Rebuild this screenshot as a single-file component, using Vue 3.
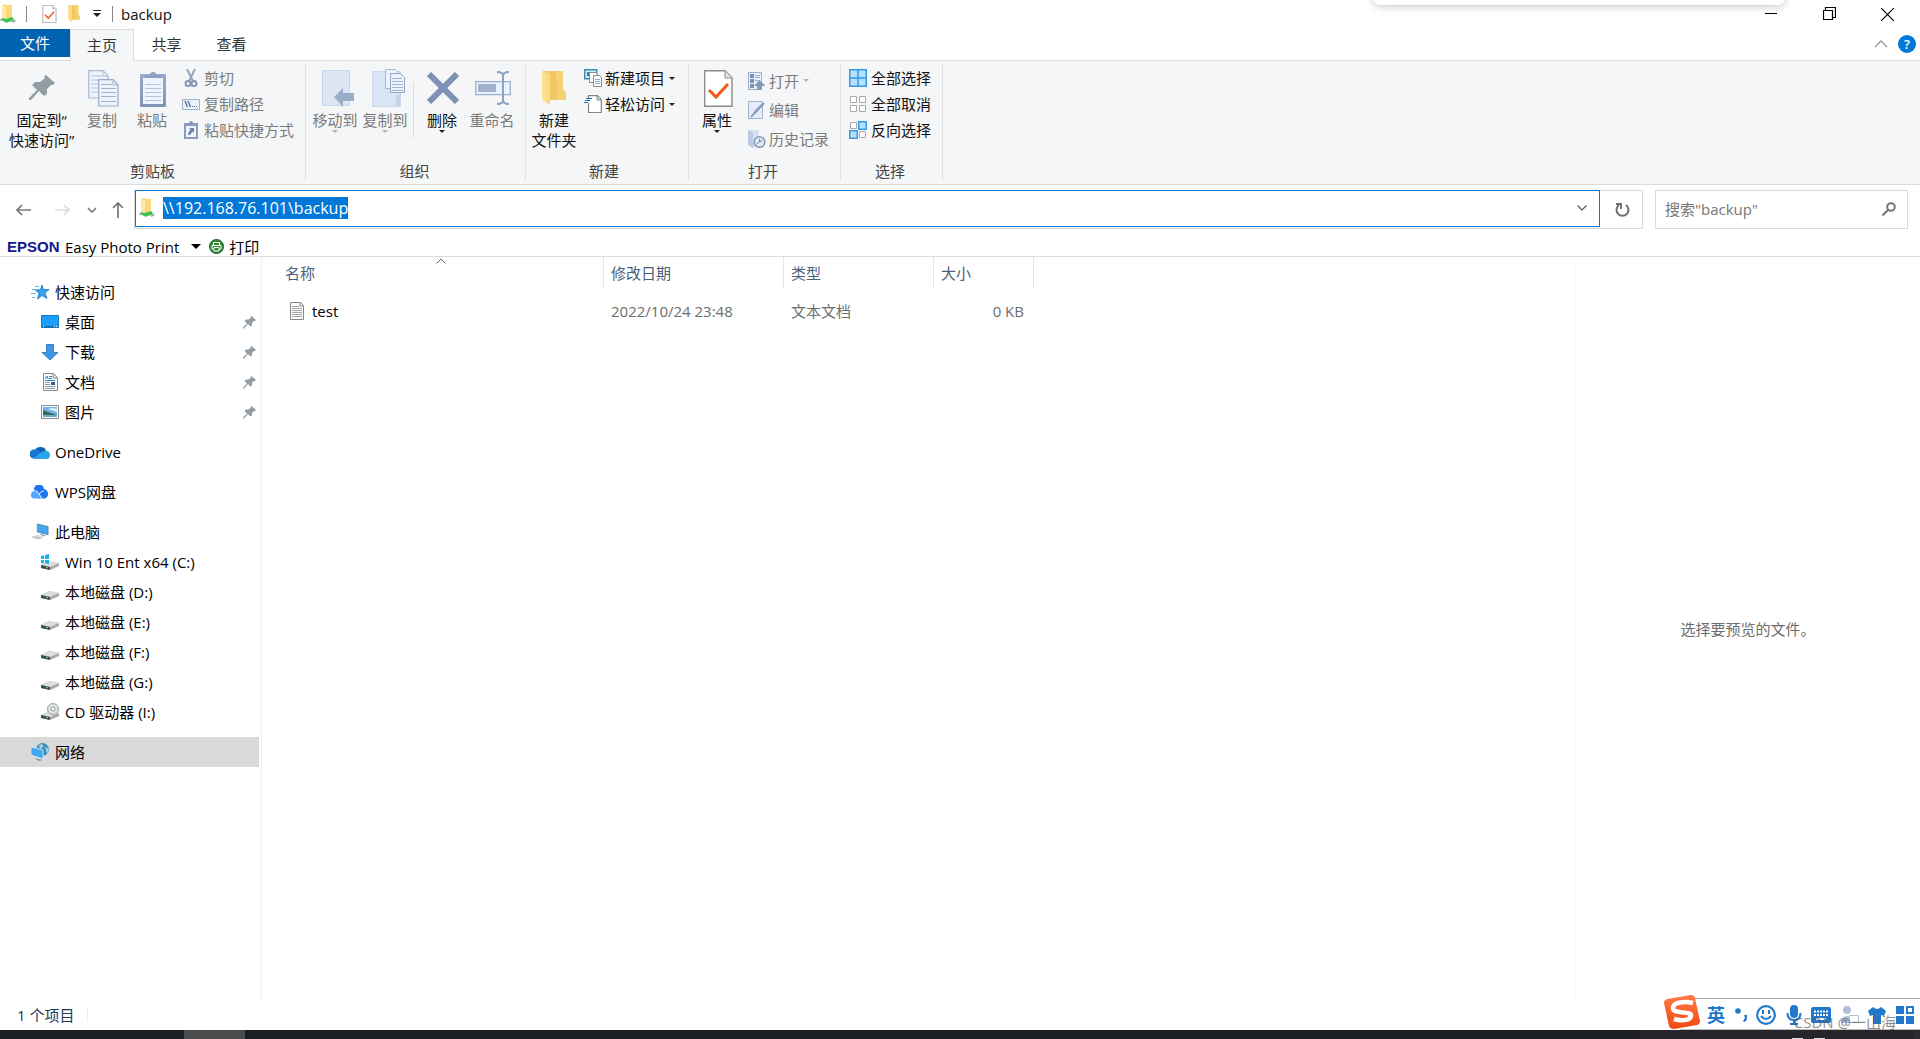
<script setup>
import { onMounted, ref } from 'vue'

const path = ref('\\\\192.168.76.101\\backup')
const query = ref('')
const pathBox = ref(null)

const quick = [
  { icon: 'desktop', name: '桌面' },
  { icon: 'download', name: '下载' },
  { icon: 'document', name: '文档' },
  { icon: 'picture', name: '图片' },
]
const drives = [
  { icon: 'windrive', name: 'Win 10 Ent x64 (C:)' },
  { icon: 'drive', name: '本地磁盘 (D:)' },
  { icon: 'drive', name: '本地磁盘 (E:)' },
  { icon: 'drive', name: '本地磁盘 (F:)' },
  { icon: 'drive', name: '本地磁盘 (G:)' },
  { icon: 'cddrive', name: 'CD 驱动器 (I:)' },
]

onMounted(() => {
  pathBox.value.focus()
  pathBox.value.select()
})
</script>

<template>
  <div class="window">
    <svg class="defs" aria-hidden="true">
      <defs>
        <linearGradient id="gold" x1="0" x2="1" y1="0" y2="0">
          <stop offset="0" stop-color="#ffe596" /><stop offset="1" stop-color="#f8d67c" />
        </linearGradient>
        <linearGradient id="clip" x1="0" x2="0" y1="0" y2="1">
          <stop offset="0" stop-color="#9babc9" /><stop offset="1" stop-color="#8092b5" />
        </linearGradient>
        <linearGradient id="sogou" x1="0" x2="0" y1="0" y2="1">
          <stop offset="0" stop-color="#ff7a45" /><stop offset="1" stop-color="#ee4a10" />
        </linearGradient>
      </defs>
      <symbol id="netfolder" viewBox="0 0 16 20">
        <path d="M2 1l3-1 2 1h5v12l-5 2-5-1z" fill="#fbd978" />
        <path d="M2 1l4 1v13l-4-1z" fill="#ffe9a6" />
        <path d="M0 15l3-1v3H0z" fill="#b7c1c6" />
        <path d="M12 15l4 1-1 2-3 1z" fill="#a9b3b8" />
        <path d="M2 14l4 1 6-2 2 2-2 1 1 1-5 1-1 1-4-2-1-1z" fill="#3cc04f" />
      </symbol>
      <symbol id="folder" viewBox="0 0 26 35">
        <path d="M8 0h13v19l3 2v8H8z" fill="#efc861" />
        <path d="M14 0h7v19l3 2v8h-8z" fill="#fbdc82" opacity=".55" />
        <path d="M0 0l8 5v29L0 29z" fill="url(#gold)" />
        <path d="M0 0h8v5z" fill="#f4d278" />
      </symbol>
      <symbol id="pin" viewBox="0 0 26 26">
        <path d="M17 0l9 8-2 2-2 0-4 4 0 5-3 2-5-5-8 9-2 0 0-2 8-8-5-5 3-3h5l5-4-1-2z" fill="#929da4" />
      </symbol>
      <symbol id="checkdoc" viewBox="0 0 29 37">
        <path d="M.7.7H21l7 7v28.600H.7z" fill="#fff" stroke="#8c8c8c" stroke-width="1.400" />
        <path d="M21 1v7h7" fill="#e4e4e4" stroke="#8c8c8c" />
        <path d="M5 20l7 7 12-13" fill="none" stroke="#f15a16" stroke-width="3" />
      </symbol>
      <symbol id="sheets" viewBox="0 0 31 37">
        <path d="M.7.7H15l5 5V28H.7z" fill="#edf3fb" stroke="#a9b8d3" stroke-width="1.200" />
        <path d="M3 6h11M3 10h14M3 14h7M3 18h7M3 22h7M15 1v5h5" fill="none" stroke="#b3c1dc" />
        <path d="M10.700 9.700H25l5 5V36H10.700z" fill="#edf3fb" stroke="#98a9c9" stroke-width="1.200" />
        <path d="M13 14.500h11M13 18.500h15M13 22.500h15M13 26.500h15M13 31.500h15M25 10v5h5" fill="none" stroke="#a1b1d2" />
      </symbol>
      <symbol id="paste" viewBox="0 0 26 37">
        <rect y="4" width="26" height="33" rx="1" fill="url(#clip)" />
        <path d="M3 8h20v26H3z" fill="#edf4fd" />
        <path d="M5 14.500h16M5 18.500h16M5 22.500h16M5 26.500h16M5 30.500h16" stroke="#b5c4df" />
        <path d="M5 8V5h5a3 3 0 1 1 6 0h5v3z" fill="#8f9fbd" />
      </symbol>
      <symbol id="cut" viewBox="0 0 18 18">
        <path d="M5 0l6 12M13 0L7 12" stroke="#93a3bf" stroke-width="2" />
        <circle cx="6" cy="14.500" r="2.500" fill="none" stroke="#8797b6" stroke-width="2" />
        <circle cx="12" cy="14.500" r="2.500" fill="none" stroke="#8797b6" stroke-width="2" />
      </symbol>
      <symbol id="copypath" viewBox="0 0 18 18">
        <path d="M.5 4.500h17v10H.5z" fill="#e8f0fb" stroke="#9fb0cb" />
        <path d="M3 6l2.500 6M6 6l2.500 6" stroke="#5b6d92" stroke-width="1.300" />
        <path d="M10 11.500h1M12 11.500h1M14 11.500h1" stroke="#5b6d92" />
      </symbol>
      <symbol id="shortcut" viewBox="0 0 18 18">
        <path d="M2 2h5a2 2 0 0 1 4 0h5v16H2z" fill="#8a9bbc" />
        <path d="M4 5h10v11H4z" fill="#edf4fd" />
        <path d="M7 7h5v5l-1.500-1.500L8 14H6q0-3 2.500-5.500z" fill="#6f84ac" />
      </symbol>
      <symbol id="moveto" viewBox="0 0 33 37">
        <path d="M.5.500h27v35H.5z" fill="#dbe5f4" stroke="#c9d7ec" />
        <path d="M12 27l9-9v5h11v8H21v6z" fill="#9bacc9" />
      </symbol>
      <symbol id="copyto" viewBox="0 0 33 38">
        <path d="M.5 2.500h28v35H.5z" fill="#d9e4f4" stroke="#c9d7ec" />
        <path d="M24 26h4v11h-4z" fill="#c4d2e8" />
        <path d="M13.500.500h10l3 3v16h-13z" fill="#edf3fb" stroke="#a6b6d2" />
        <path d="M18.500 4.500h10l4 4v15h-14z" fill="#edf3fb" stroke="#93a5c6" />
        <path d="M20 9.500h10M20 12.500h11M20 15.500h11M20 18.500h11M20 21.500h11" stroke="#a1b1d2" />
      </symbol>
      <symbol id="delete" viewBox="0 0 32 32">
        <path d="M2 2l28 28M30 2L2 30" stroke="#7f92b5" stroke-width="6" />
      </symbol>
      <symbol id="rename" viewBox="0 0 36 34">
        <path d="M.7 10.700h34.600v13H.7z" fill="#e9f2fd" stroke="#9dafcf" stroke-width="1.300" />
        <path d="M3 13h18v8H3z" fill="#a1b1cf" />
        <path d="M22 1c3 0 6 1 6 4v24c0 3-3 4-6 4M34 1c-3 0-6 1-6 4v24c0 3 3 4 6 4" fill="none" stroke="#8da0c1" stroke-width="2" />
      </symbol>
      <symbol id="newitem" viewBox="0 0 18 18">
        <path d="M.7.700h12v9H.7z" fill="#cdebf8" stroke="#3f8bad" stroke-width="1.400" />
        <path d="M3 3h5v4H3z" fill="#377b9a" />
        <path d="M5.500 3.500h6l2 2v8h-8z" fill="#fff" stroke="#8a8a8a" />
        <path d="M9.500 6.500h6l2 2v9h-8z" fill="#fff" stroke="#8a8a8a" />
        <path d="M11 10.500h5M11 12.500h5M11 14.500h5" stroke="#87aeda" />
      </symbol>
      <symbol id="easy" viewBox="0 0 18 18">
        <path d="M4.500.700h9l3.800 3.800v13H4.500z" fill="#fff" stroke="#858585" stroke-width="1.200" />
        <path d="M13 1v4h4" fill="#ddd" stroke="#858585" />
        <path d="M3 3h4v5H3z" fill="#f5f6f7" />
        <path d="M2 3.500h6M1 5.500h5M0 7.500h4" stroke="#1c6fb7" />
      </symbol>
      <symbol id="open" viewBox="0 0 18 18">
        <path d="M.5.500h13v17H.5z" fill="#e8f0fb" stroke="#9fb0cb" />
        <path d="M2 2h4v4H2zM2 7h4v4H2zM2 12h4v4H2z" fill="#7f91b3" />
        <path d="M7 3.500h5M7 5.500h5M7 8.500h4" stroke="#9fb0cb" />
        <path d="M11.500 8l6 6H14v4H9v-4H6z" fill="#8698b9" />
      </symbol>
      <symbol id="edit" viewBox="0 0 18 18">
        <path d="M.5.500h14v17H.5z" fill="#e4edf9" stroke="#9fb0cb" />
        <path d="M4 15l2-5 8-8 2 2-9 9z" fill="#a4b4d1" />
        <path d="M3 16L16 2" stroke="#7e91b5" stroke-width="1.500" />
      </symbol>
      <symbol id="history" viewBox="0 0 18 18">
        <path d="M0 0h11v15l-6 3-5-3z" fill="#d4e0f1" />
        <path d="M0 0l5 3v15l-5-3z" fill="#bccbe3" />
        <circle cx="11.500" cy="12" r="5.300" fill="#e2e9f4" stroke="#8496b7" stroke-width="1.500" />
        <path d="M11.500 9v3l-3 2M12 12l2-2" fill="none" stroke="#7082a5" />
      </symbol>
      <symbol id="selall" viewBox="0 0 18 18">
        <path d="M.7.700h16.600v16.600H.7zM9 1v16M1 9h16" fill="#b5e1fb" stroke="#3499e5" stroke-width="1.500" />
      </symbol>
      <symbol id="selnone" viewBox="0 0 18 18">
        <path d="M1.500 1.500h6v6h-6zM10.500 1.500h6v6h-6zM1.500 10.500h6v6h-6zM10.500 10.500h6v6h-6z" fill="#fff" stroke="#aaa" />
      </symbol>
      <symbol id="selinv" viewBox="0 0 18 18">
        <path d="M1.500 1.500h6v6h-6zM10.500 10.500h6v6h-6z" fill="#fff" stroke="#aaa" />
        <path d="M9.700.700h7.600v7.600H9.700zM.7 9.700h7.600v7.600H.7z" fill="#b5e1fb" stroke="#3499e5" stroke-width="1.500" />
      </symbol>
      <symbol id="star" viewBox="0 0 18 18">
        <path d="M11 2l1.500 4.500H18L14 10l2 5.500-5-3-4.500 3.500L8 10.500 4.500 7l5-.5z" fill="#35a3ec" stroke="#1673bf" stroke-width=".8" />
        <path d="M4 3.500h4M1 6.500h4M0 10.500h5M1 14.500h3" stroke="#64b9ee" />
      </symbol>
      <symbol id="desktop" viewBox="0 0 18 18">
        <path d="M.5 2.500h17v12H.5z" fill="#1a9dfb" stroke="#1479c4" />
        <path d="M1 13.500h16" stroke="#0f66a8" /><path d="M2 13.500h1M13 13.500h1M15 13.500h1" stroke="#fff" />
      </symbol>
      <symbol id="download" viewBox="0 0 18 18">
        <path d="M5.500 1.500h7v8h4.500l-8 7.500-8-7.500h4.500z" fill="#3c97ea" stroke="#1f6fb8" stroke-width=".8" />
      </symbol>
      <symbol id="document" viewBox="0 0 18 18">
        <path d="M2.500.500h10l4 4v13h-14z" fill="#fff" stroke="#8a8a8a" />
        <path d="M12 1v4h4" fill="#ddd" stroke="#8a8a8a" />
        <path d="M4 6l2-3 1 3M8 3.500h3M8 5.500h3M4 7.500h10" stroke="#2383c9" fill="none" />
        <path d="M4 9.500h5M4 11.500h5M4 13.500h10M4 15.500h10" stroke="#8d9ba7" /><path d="M10 9h4v3h-4z" fill="#315f92" />
      </symbol>
      <symbol id="picture" viewBox="0 0 18 18">
        <path d="M.5 2.500h17v13H.5z" fill="#fff" stroke="#8a8a8a" />
        <path d="M2 4h14v10H2z" fill="#71b3e8" /><path d="M2 7l5 2 9 3v1H2z" fill="#396a58" /><path d="M7 6q5-2 9 0v3z" fill="#d8edfa" /><path d="M2 12h14v2H2z" fill="#6aa8cf" />
      </symbol>
      <symbol id="onedrive" viewBox="0 0 20 14">
        <path d="M5 5a6 5 0 0 1 11 0l-4 6z" fill="#0c63b5" />
        <path d="M4 4.500c3-1 5 1 7 3l-5 6H4a4.500 4.500 0 0 1 0-9z" fill="#1479d2" />
        <path d="M4 13l8-6c5-3 8 0 8 3 0 2-1 4-3 4H5z" fill="#2ba5ea" />
      </symbol>
      <symbol id="wps" viewBox="0 0 20 14">
        <path d="M4 5a5 5 0 0 1 10-1 5 5 0 0 1 1 9.500H9z" fill="#1f74f0" />
        <path d="M1 10a4.500 4.500 0 0 1 7-4l5 7.500H4a3 3 0 0 1-3-3.500z" fill="#57a6fc" />
        <path d="M3 6c4-1 6 3 9 8M9 9q2-3 5-3" fill="none" stroke="#fff" stroke-width=".8" />
      </symbol>
      <symbol id="pc" viewBox="0 0 20 18">
        <path d="M7 0l12 3v9L7 9z" fill="#42a8f4" stroke="#59788f" stroke-width=".8" />
        <path d="M11 11l6 2-3 1-4-2z" fill="#9baab5" /><path d="M0 14l8-2 6 3-7 3z" fill="#d5dadd" /><path d="M2 15l9 1" stroke="#b3b9bd" />
      </symbol>
      <symbol id="drive" viewBox="0 0 18 18">
        <path d="M0 12l8-4 10 2v3l-9 4-9-2z" fill="#a8a8a8" /><path d="M0 12l8-4 10 2-9 4z" fill="#dedede" /><path d="M0 12l9 2v3l-9-2z" fill="#494949" /><path d="M5 14.500h2" stroke="#48ce52" stroke-width="1.500" />
      </symbol>
      <symbol id="windrive" viewBox="0 0 18 18">
        <use href="#drive" />
        <path d="M0 3l3-.5V6H0zM4 2l4-1v5H4zM0 7h3v3.500L0 10zM4 7h4v4l-4-.5z" fill="#15b4ee" />
      </symbol>
      <symbol id="cddrive" viewBox="0 0 18 18">
        <use href="#drive" />
        <circle cx="12" cy="6" r="5.500" fill="#dce1e1" stroke="#9da4a4" /><circle cx="12" cy="6" r="2" fill="#fff" stroke="#999" />
      </symbol>
      <symbol id="network" viewBox="0 0 18 18">
        <circle cx="11.500" cy="6.500" r="6.500" fill="#3f8fb9" /><path d="M8 2c3-2 5 0 4 2L9 6zM14 4l4 2-2 5z" fill="#a0d4e8" />
        <path d="M0 4l12 3v9L0 12z" fill="#3da9f5" stroke="#dcecf5" stroke-width=".8" /><path d="M3 15l5 1 4 1-4 1z" fill="#8497a4" />
      </symbol>
      <symbol id="textfile" viewBox="0 0 18 18">
        <path d="M2.500.500h10l3 3v14h-13z" fill="#fcfcfc" stroke="#858585" />
        <path d="M4 4.500h7M4 6.500h10M4 8.500h10M4 10.500h10M4 12.500h10M4 14.500h10" stroke="#a5a5a5" /><path d="M12 1v3h3" fill="none" stroke="#858585" />
      </symbol>
    </svg>

    <header class="titlebar">
      <svg class="t-net"><use href="#netfolder" /></svg>
      <i class="t-sep"></i>
      <button class="bare" aria-label="属性"><svg class="t-check"><use href="#checkdoc" /></svg></button>
      <button class="bare" aria-label="新建文件夹"><svg class="t-folder"><use href="#folder" /></svg></button>
      <button class="bare t-more" aria-label="自定义快速访问工具栏"><svg width="8" height="8"><path d="M0 .5h8" stroke="#222" /><path d="M0 3h8L4 7z" fill="#222" /></svg></button>
      <i class="t-sep"></i>
      <h1>backup</h1>
      <div class="controls">
        <button class="bare" aria-label="最小化"><svg width="12" height="12"><path d="M0 5.500h12" stroke="#000" /></svg></button>
        <button class="bare" aria-label="还原"><svg width="13" height="14"><path d="M.5 3.500h9v9h-9zM2.500 3V.5h10v10H10" fill="none" stroke="#000" stroke-width="1.200" /></svg></button>
        <button class="bare" aria-label="关闭"><svg width="13" height="13"><path d="M0 0l13 13M13 0L0 13" stroke="#000" stroke-width="1.200" /></svg></button>
      </div>
      <div class="flyout"></div>
    </header>

    <nav class="tabs">
      <button class="tab file">文件</button>
      <button class="tab active">主页</button>
      <button class="tab">共享</button>
      <button class="tab">查看</button>
      <div class="tab-end">
        <button class="bare" aria-label="折叠功能区"><svg width="14" height="8"><path d="M1 7l6-6 6 6" fill="none" stroke="#999" stroke-width="1.400" /></svg></button>
        <button class="help" aria-label="帮助">?</button>
      </div>
    </nav>

    <section class="ribbon">
      <div class="group g-clip">
        <div class="tools">
          <button class="big w70"><span class="pic"><svg width="26" height="26"><use href="#pin" /></svg></span>固定到“<br />快速访问”</button>
          <button class="big off"><span class="pic near"><svg width="31" height="37"><use href="#sheets" /></svg></span>复制</button>
          <button class="big off"><span class="pic near"><svg width="26" height="37"><use href="#paste" /></svg></span>粘贴</button>
          <div class="stack">
            <button class="small off"><svg><use href="#cut" /></svg>剪切</button>
            <button class="small off"><svg><use href="#copypath" /></svg>复制路径</button>
            <button class="small off"><svg><use href="#shortcut" /></svg>粘贴快捷方式</button>
          </div>
        </div>
        <p>剪贴板</p>
      </div>
      <div class="group g-org">
        <div class="tools">
          <button class="big off"><span class="pic far"><svg width="33" height="37"><use href="#moveto" /></svg></span>移动到<i class="caret"></i></button>
          <button class="big off"><span class="pic far"><svg width="33" height="38"><use href="#copyto" /></svg></span>复制到<i class="caret"></i></button>
          <i class="bar"></i>
          <button class="big"><span class="pic near"><svg width="32" height="32"><use href="#delete" /></svg></span>删除<i class="caret"></i></button>
          <button class="big off"><span class="pic near"><svg width="36" height="34"><use href="#rename" /></svg></span>重命名</button>
        </div>
        <p>组织</p>
      </div>
      <div class="group g-new">
        <div class="tools">
          <button class="big w56"><span class="pic near"><svg width="26" height="35"><use href="#folder" /></svg></span>新建<br />文件夹</button>
          <div class="stack">
            <button class="small"><svg><use href="#newitem" /></svg>新建项目<i class="caret"></i></button>
            <button class="small"><svg><use href="#easy" /></svg>轻松访问<i class="caret"></i></button>
          </div>
        </div>
        <p>新建</p>
      </div>
      <div class="group g-open">
        <div class="tools">
          <button class="big"><span class="pic near"><svg width="29" height="37"><use href="#checkdoc" /></svg></span>属性<i class="caret"></i></button>
          <div class="stack loose">
            <button class="small off"><svg><use href="#open" /></svg>打开<i class="caret"></i></button>
            <button class="small off"><svg><use href="#edit" /></svg>编辑</button>
            <button class="small off"><svg><use href="#history" /></svg>历史记录</button>
          </div>
        </div>
        <p>打开</p>
      </div>
      <div class="group g-sel">
        <div class="tools">
          <div class="stack">
            <button class="small"><svg><use href="#selall" /></svg>全部选择</button>
            <button class="small"><svg><use href="#selnone" /></svg>全部取消</button>
            <button class="small"><svg><use href="#selinv" /></svg>反向选择</button>
          </div>
        </div>
        <p>选择</p>
      </div>
    </section>

    <section class="location">
      <div class="moves">
        <button class="bare" aria-label="返回"><svg width="16" height="12"><path d="M15 6H1M6 1L1 6l5 5" fill="none" stroke="#757575" stroke-width="1.700" /></svg></button>
        <button class="bare" aria-label="前进"><svg width="16" height="12"><path d="M1 6h14M10 1l5 5-5 5" fill="none" stroke="#dcdcdc" stroke-width="1.700" /></svg></button>
        <button class="bare" aria-label="最近浏览的位置"><svg width="10" height="12"><path d="M1 4l4 4 4-4" fill="none" stroke="#808080" stroke-width="1.700" /></svg></button>
        <button class="bare" aria-label="上移"><svg width="12" height="16"><path d="M6 16V1M1 6l5-5 5 5" fill="none" stroke="#757575" stroke-width="1.700" /></svg></button>
      </div>
      <div class="address">
        <div class="path">
          <svg width="16" height="20"><use href="#netfolder" /></svg>
          <input ref="pathBox" v-model="path" type="text" aria-label="地址" spellcheck="false" />
          <button class="bare" aria-label="以前的位置"><svg width="10" height="6"><path d="M.5.500L5 5 9.500.500" fill="none" stroke="#555" stroke-width="1.200" /></svg></button>
        </div>
        <button class="bare refresh" aria-label="刷新"><svg width="16" height="16"><path d="M11 3a6 6 0 1 1-7 0" fill="none" stroke="#6e6e6e" stroke-width="2" /><path d="M1 2h5v5" fill="none" stroke="#6e6e6e" stroke-width="1.800" /></svg></button>
      </div>
      <div class="search">
        <input v-model="query" type="text" placeholder="搜索&quot;backup&quot;" aria-label="搜索" />
        <svg width="14" height="14"><circle cx="9" cy="5" r="3.800" fill="none" stroke="#777" stroke-width="2" /><path d="M6 8l-5.500 5.500" stroke="#777" stroke-width="2" /></svg>
      </div>
    </section>

    <section class="epson">
      <strong>EPSON</strong>
      <button class="bare easy">Easy Photo Print<svg width="10" height="6"><path d="M0 0h10L5 5z" fill="#000" /></svg></button>
      <button class="bare print"><svg width="15" height="15"><circle cx="7.500" cy="7.500" r="7" fill="#2e8b35" stroke="#1e5e2b" /><path d="M4.500 6V3.500h6V6M4.500 10H3V6.500h9V10h-1.500M5 8.500h5v3.500H5z" fill="none" stroke="#fff" /></svg>打印</button>
    </section>

    <main class="body">
      <aside class="tree">
        <ul>
          <li><a href="#"><svg><use href="#star" /></svg>快速访问</a></li>
          <li v-for="q in quick" :key="q.name"><a href="#" class="sub"><svg><use :href="'#' + q.icon" /></svg>{{ q.name }}<svg class="pinned"><use href="#pin" /></svg></a></li>
        </ul>
        <ul><li><a href="#" class="cloud"><svg><use href="#onedrive" /></svg>OneDrive</a></li></ul>
        <ul><li><a href="#" class="cloud"><svg><use href="#wps" /></svg>WPS网盘</a></li></ul>
        <ul>
          <li><a href="#"><svg><use href="#pc" /></svg>此电脑</a></li>
          <li v-for="d in drives" :key="d.name"><a href="#" class="sub"><svg><use :href="'#' + d.icon" /></svg>{{ d.name }}</a></li>
        </ul>
        <ul><li><a href="#" class="current"><svg><use href="#network" /></svg>网络</a></li></ul>
      </aside>
      <div class="files">
        <table>
          <thead>
            <tr>
              <th class="c-name">名称<svg class="sort" width="10" height="6"><path d="M.5 5.500L5 1l4.500 4.500" fill="none" stroke="#666" /></svg></th>
              <th class="c-date">修改日期</th>
              <th class="c-type">类型</th>
              <th class="c-size">大小</th>
            </tr>
          </thead>
          <tbody>
            <tr>
              <td><span class="fname"><svg width="18" height="18"><use href="#textfile" /></svg>test</span></td>
              <td>2022/10/24 23:48</td>
              <td>文本文档</td>
              <td class="num">0 KB</td>
            </tr>
          </tbody>
        </table>
      </div>
      <aside class="preview">选择要预览的文件。</aside>
    </main>

    <footer class="status"><span>1 个项目</span></footer>
    <div class="taskbar">
      <i class="running"></i>
      <div class="tray"><i class="clock"></i><i class="clock"></i></div>
      <div class="ime">
        <svg class="s-logo" viewBox="0 0 36 35"><path d="M3 4L27 0q3 0 4 3l5 23q0 3-3 4L10 34q-4 0-5-3L0 8q0-3 3-4z" fill="url(#sogou)" /><path d="M29 8c-8-2-20-1-20 5 0 7 19 2 18 8-1 5-11 5-17 3" fill="none" stroke="#fff" stroke-width="4.500" /></svg>
        <b>英</b>
        <svg width="12" height="18"><circle cx="3" cy="5" r="2.800" fill="#2278ca" /><path d="M9 9h3v3q0 3-3 4l-1-1 2-3z" fill="#2278ca" /></svg>
        <svg width="20" height="20"><circle cx="10" cy="10" r="8.800" fill="none" stroke="#2278ca" stroke-width="2.200" /><path d="M7 5v4M13 5v4M5 11q5 6 10 0" fill="none" stroke="#2278ca" stroke-width="2" /></svg>
        <svg width="16" height="20"><rect x="4" width="8" height="13" rx="4" fill="#2278ca" /><path d="M1.500 8q0 7 6.500 7t6.500-7M8 15v4M4 19h8" fill="none" stroke="#2278ca" stroke-width="2" /></svg>
        <svg width="20" height="16"><rect width="20" height="16" rx="2" fill="#2278ca" /><path d="M3 4.500h14M3 8h14" stroke="#fff" stroke-width="2" stroke-dasharray="2 1" /><path d="M5 12h10" stroke="#fff" stroke-width="2" /></svg>
        <svg width="18" height="18"><circle cx="6" cy="4" r="4" fill="#b1bfdc" /><path d="M0 17V13q6-6 12 0v4z" fill="#b1bfdc" /><path d="M8.500 9.500h9v7h-9z" fill="#fff" stroke="#b1bfdc" /></svg>
        <svg width="18" height="17"><path d="M5 0q4 4 8 0l5 4-2 5-3-1v9H5V8L2 9 0 4z" fill="#2278ca" /></svg>
        <svg width="18" height="18"><path d="M0 0h8v8H0zM0 10h8v8H0zM10 10h8v8h-8z" fill="#2278ca" /><rect x="11" y="1" width="6" height="6" fill="#fff" stroke="#2278ca" stroke-width="2" /></svg>
        <span class="mark">CSDN @一山海</span>
      </div>
    </div>
  </div>
</template>

<style>
body { margin: 0; }
</style>

<style scoped>
.window {
  display: flex;
  flex-direction: column;
  min-height: 100vh;
  overflow: hidden;
  background: #fff;
  color: #111;
  font: 15px/20px "Open Sans", "Noto Sans CJK SC", sans-serif;
}
.window * { box-sizing: border-box; }
.defs { position: absolute; width: 0; height: 0; }
svg { display: block; flex: none; }
button, input { font: inherit; color: inherit; }
button { padding: 0; border: 0; background: none; }
.bare { display: flex; align-items: center; justify-content: center; }

.titlebar { position: relative; display: flex; align-items: center; height: 29px; padding-bottom: 1px; }
.t-net { width: 16px; height: 20px; }
.t-sep { width: 1px; height: 16px; margin-left: 10px; background: #888; }
.t-check { width: 15px; height: 18px; margin-left: 15px; }
.t-folder { width: 13px; height: 18px; margin-left: 11px; }
.t-more { margin: 0 1px 0 12px; }
h1 { margin: 0 0 0 8px; font-size: 15px; font-weight: 400; }
.controls { display: flex; margin-left: auto; padding-right: 4px; }
.controls button { width: 58px; height: 28px; }
.flyout {
  position: absolute; top: -9px; right: 135px; width: 412px; height: 14px;
  border-radius: 8px; background: #fff; box-shadow: 0 1px 8px rgba(0, 0, 0, .25);
}

.tabs { display: flex; height: 32px; border-bottom: 1px solid #dadbdc; }
.tab { width: 65px; height: 30px; color: #333; }
.tab.file { width: 70px; height: 28px; background: #0063b1; color: #fff; }
.tab.active { width: 64px; height: 32px; padding-bottom: 2px; border: 1px solid #dadbdc; border-bottom: 0; background: #f5f6f7; }
.tab-end { display: flex; align-items: center; gap: 10px; height: 30px; margin-left: auto; padding-right: 4px; }
.help { width: 18px; height: 18px; border-radius: 9px; background: #0078d7; color: #fff; font-size: 13px; font-weight: 600; line-height: 18px; }

.ribbon { display: flex; height: 124px; border-bottom: 1px solid #dadbdc; background: #f5f6f7; }
.group { position: relative; display: flex; flex-direction: column; flex: none; margin: 2px 0 3px; border-right: 1px solid #e0e1e3; }
.group p { margin: 0; padding-right: 6px; color: #444; text-align: center; }
.tools { display: flex; flex: 1; align-items: flex-start; }
.g-clip { width: 306px; padding-left: 6px; }
.g-org { width: 220px; padding-left: 4px; }
.g-new { width: 163px; }
.g-open { width: 152px; padding-left: 3px; }
.g-sel { width: 102px; padding-left: 3px; }
.big { display: flex; flex-direction: column; align-items: center; width: 50px; padding-top: 3px; line-height: 20px; white-space: nowrap; }
.w70 { width: 71px; }
.w56 { width: 56px; }
.pic { display: flex; align-items: center; justify-content: center; height: 44px; }
.pic.near { padding-left: 2px; }
.pic.far { padding-left: 6px; }
.off { color: #7a7a7a; }
.caret { width: 0; height: 0; border: 3px solid transparent; border-top-color: #222; border-bottom: 0; }
.off .caret { border-top-color: #b5b5b5; }
.bar { width: 1px; height: 56px; margin: 19px 3px 0; background: #dcdddf; }
.stack { display: flex; flex-direction: column; padding: 2px 0 0 5px; }
.g-new .stack { padding-left: 2px; }
.small { display: flex; align-items: center; gap: 4px; height: 26px; white-space: nowrap; }
.g-new .small, .g-open .small { gap: 3px; }
.small svg { width: 18px; height: 18px; }
.small .caret { margin-left: 1px; }
.loose { padding: 3px 0 0 6px; }
.loose .small { height: 29px; }

.location { display: flex; align-items: flex-start; height: 49px; padding: 5px 12px 0 0; }
.moves { display: flex; align-items: center; width: 134px; height: 40px; padding-left: 16px; }
.moves button:nth-child(2) { margin-left: 22px; }
.moves button:nth-child(3) { margin-left: 17px; }
.moves button:nth-child(4) { margin-left: 15px; }
.address { display: flex; flex: 1; height: 39px; border: 1px solid #d9d9d9; border-top: 0; }
.path { display: flex; flex: 1; align-items: center; height: 37px; padding: 0 12px 2px 3px; border: 1px solid #0078d7; }
.path input { flex: 1; min-width: 0; height: 22px; margin-left: 8px; padding: 0; border: 0; outline: 0; background: none; font-size: 16px; }
.path input::selection { background: #0078d7; color: #fff; }
.refresh { width: 42px; padding-left: 3px; border-top: 1px solid #d9d9d9; }
.search { display: flex; align-items: center; width: 253px; height: 39px; margin-left: 12px; padding: 0 11px 2px 9px; border: 1px solid #d9d9d9; }
.search input { flex: 1; min-width: 0; padding: 0; border: 0; outline: 0; background: none; }
.search input::placeholder { color: #767676; opacity: 1; }

.epson { display: flex; align-items: center; height: 23px; padding: 3px 0 0 7px; border-bottom: 1px solid #dadbdc; color: #000; }
.epson strong { width: 58px; color: #13188a; font: 700 15px/20px "Liberation Sans", Arial, sans-serif; }
.easy svg { margin-left: 12px; }
.print { margin-left: 8px; gap: 5px; }

.body { display: flex; flex: 1; }
.tree { flex: none; width: 262px; padding: 20px 2px 0 0; border-right: 1px solid #f2f2f2; }
.tree ul { margin: 0 0 10px; padding: 0; list-style: none; }
.tree a { display: flex; align-items: center; gap: 6px; height: 30px; padding-left: 31px; color: #000; text-decoration: none; }
.tree a svg { width: 18px; height: 18px; }
.tree a.sub { padding-left: 41px; }
.tree a.cloud { padding-left: 30px; gap: 5px; }
.tree a.cloud svg { width: 20px; height: 14px; }
.tree a.current { background: #d9d9d9; }
.tree a .pinned { width: 13px; height: 13px; margin: 0 3px 0 auto; }

.files { flex: 1; }
table { border-collapse: separate; border-spacing: 0; table-layout: fixed; width: 772px; }
th { position: relative; height: 32px; padding: 0 0 0 7px; border-right: 1px solid #e5e5e5; color: #4c607a; font-weight: 400; text-align: left; }
th.c-name { width: 342px; padding-left: 23px; }
.c-date { width: 180px; }
.c-type { width: 150px; }
.c-size { width: 100px; }
.sort { position: absolute; left: 174px; top: 1px; }
td { padding: 8px 0 0 7px; height: 36px; color: #6d6d6d; }
td:first-child { padding-left: 26px; color: #000; }
td.num { padding-right: 10px; text-align: right; }
.fname { display: flex; align-items: center; gap: 6px; }
.preview { display: flex; flex: none; align-items: center; justify-content: center; width: 345px; border-left: 1px solid #fafafa; color: #6d6d6d; }

.status { display: flex; align-items: center; height: 30px; padding-left: 17px; color: #1e395b; }
.status span { padding-right: 13px; border-right: 1px solid #eee; line-height: 14px; }
.taskbar { position: relative; display: flex; height: 9px; background: #1b1f22; }
.running { width: 61px; margin-left: 184px; background: #4a4c4d; }
.tray { display: flex; align-items: flex-end; gap: 11px; width: 280px; margin-left: auto; padding-left: 152px; border-right: 6px solid #2d2a30; background: #27242a; }
.clock { width: 11px; height: 1px; background: #ddd; }
.ime {
  position: absolute; right: 0; bottom: 9px; display: flex; align-items: center; justify-content: space-between;
  width: 240px; height: 32px; padding: 2px 6px 0 27px;
  border-top: 1px solid #aaa; border-bottom: 1px solid #bbb; background: #fff; color: #2278ca;
}
.ime b { font-size: 18px; line-height: 24px; }
.s-logo { position: absolute; left: -16px; bottom: -1px; width: 36px; height: 35px; }
.mark { position: absolute; right: 24px; bottom: -5px; color: rgba(90, 90, 90, .7); font-size: 15px; line-height: 24px; white-space: nowrap; }
</style>
